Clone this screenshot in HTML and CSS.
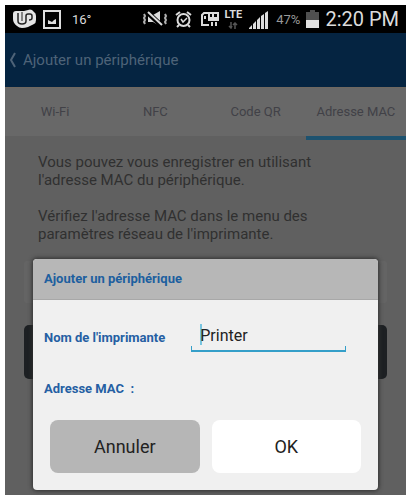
FILE: index.html
```html
<!DOCTYPE html>
<html lang="fr">
<head>
<meta charset="utf-8">
<meta name="viewport" content="width=device-width, initial-scale=1">
<title>Ajouter un périphérique</title>
<link rel="stylesheet" href="styles.css">
</head>
<body>
<div class="screen">
  <div class="status">
    <div class="status-group">
      <svg width="23" height="20" viewBox="0 0 23 20" aria-hidden="true">
        <path d="M0 5Q0 2 3 2h8l4-1q2-1 4 0l2 2q2 1 2 4v4q0 3-2 4l-6 3q-3 1-6 1-3 0-5-2-4-3-4-7z" fill="#e4e4e4"/>
        <path d="M5 4v8q0 3 4 3t4-3V7q0-2 2-2h2q2 0 2 2v2q0 2-3 2" fill="none" stroke="#222" stroke-width="1.500"/>
        <path d="M9 3v9" stroke="#222" stroke-width="1"/>
      </svg>
      <svg width="18" height="19" viewBox="0 0 18 19" aria-hidden="true">
        <rect x="1" y="1" width="16" height="17" fill="none" stroke="#dedede" stroke-width="2"/>
        <path d="M5 14v-4l2 1 2 1 2-2 2-1v5z" fill="#dedede"/>
      </svg>
      <span class="temp">16°</span>
    </div>
    <div class="status-group status-right">
      <svg width="27" height="16" viewBox="0 0 27 16" aria-hidden="true">
        <path d="M6 4h5l7-4v15l-7-4H6z" fill="#dcdcdc"/>
        <path d="M5 1l15 14" stroke="#000" stroke-width="5"/>
        <path d="M6 1l14 13" stroke="#dcdcdc" stroke-width="2"/>
        <path d="M2 3l1 2-1 2 1 2-1 2 1 2M23 3l1 2-1 2 1 2-1 2 1 2" fill="none" stroke="#b0b0b0" stroke-width="2"/>
      </svg>
      <svg width="17" height="17" viewBox="0 0 17 17" fill="none" stroke="#dcdcdc" stroke-width="2" aria-hidden="true">
        <circle cx="8.500" cy="9" r="6"/>
        <path d="M1 4l4-3M16 4l-4-3M4 14l-2 2M13 14l2 2"/>
        <path d="M6 8l2 3 4-4" stroke-width="1.500"/>
      </svg>
      <svg class="card" width="18" height="16" viewBox="0 0 18 16" fill="none" stroke="#dcdcdc" stroke-width="2" aria-hidden="true">
        <path d="M8 14H1V4l2-2h4M4 5v3"/>
        <path d="M8 2h4v5H8zM13 2h4v5h-4M7 9h11M11 11v4M15 11v4"/>
      </svg>
      <div class="lte"><span>LTE</span>
        <svg width="10" height="7" viewBox="0 0 10 7" fill="none" stroke="#555" stroke-width="1.500" aria-hidden="true"><path d="M3 0v6M1 4l2 2 1-2M7 7V1M5 3l2-2 2 2"/></svg>
      </div>
      <svg class="signal" width="19" height="18" viewBox="0 0 19 18" fill="#dcdcdc" aria-hidden="true">
        <path d="M0 18v-1l3-3v4zM4 18v-5l3-3v8zM8 18V9l3-3v12zM12 18V5l3-2v15zM16 18V2l3-2v18z"/>
      </svg>
      <span class="percent">47%</span>
      <svg width="13" height="18" viewBox="0 0 13 18" aria-hidden="true">
        <path d="M4 0h5v2h4v8H0V2h4z" fill="#505050"/><path d="M0 10h13v8H0z" fill="#e0e0e0"/>
      </svg>
      <time class="clock">2:20 PM</time>
    </div>
  </div>

  <header class="appbar">
    <a class="back" href="#">
      <svg width="8" height="16" viewBox="0 0 8 16" fill="none" stroke="#4e6378" stroke-width="2" aria-hidden="true"><path d="M6 1L2 8l4 7"/></svg>
      <span>Ajouter un périphérique</span>
    </a>
  </header>

  <nav class="tabs">
    <a class="tab" href="#">Wi-Fi</a>
    <a class="tab" href="#">NFC</a>
    <a class="tab" href="#">Code QR</a>
    <a class="tab active" href="#" aria-current="page">Adresse MAC</a>
  </nav>

  <main class="content">
    <p>Vous pouvez vous enregistrer en utilisant<br>l'adresse MAC du périphérique.</p>
    <p>Vérifiez l'adresse MAC dans le menu des<br>paramètres réseau de l'imprimante.</p>
    <input class="mac" type="text" aria-label="Adresse MAC" disabled>
    <button class="submit" type="button" aria-label="Ajouter" disabled></button>
  </main>

  <form class="dialog" role="dialog" aria-labelledby="dialog-title">
    <h2 class="dialog-title" id="dialog-title">Ajouter un périphérique</h2>
    <div class="dialog-body">
      <div class="field">
        <label class="label" for="printer-name">Nom de l'imprimante</label>
        <div class="entry"><input id="printer-name" type="text" value="Printer"></div>
      </div>
      <div class="label mac-line">Adresse MAC&nbsp; :</div>
      <div class="actions">
        <button class="button cancel" type="button">Annuler</button>
        <button class="button" type="submit">OK</button>
      </div>
    </div>
  </form>
</div>
</body>
</html>
```
FILE: styles.css
```css
* { box-sizing: border-box; }

body {
  margin: 0;
  padding: 5px 2px 0 5px;
  background: #fff;
  font-family: Roboto, "Liberation Sans", sans-serif;
}

a { color: inherit; text-decoration: none; }
svg { display: block; flex: none; }

.screen {
  position: relative;
  display: flex;
  flex-direction: column;
  min-height: calc(100vh - 5px);
  background: #606060;
  overflow: hidden;
}

.status {
  display: flex;
  justify-content: space-between;
  height: 28px;
  padding: 0 7px 0 8px;
  background: #000;
  color: #dcdcdc;
}

.status-group { display: flex; align-items: center; gap: 7px; }
.status-right { gap: 6px; }
.temp { margin-left: 4px; font-family: "Liberation Sans Narrow", Roboto, sans-serif; font-size: 13px; }
.card { margin-left: 3px; }
.lte { display: flex; flex-direction: column; align-items: center; gap: 2px; font-size: 11px; font-weight: 700; line-height: 10px; }
.signal { align-self: flex-end; margin: 0 2px 4px 1px; }
.percent { color: #999; font-size: 13px; }
.clock { font-size: 20px; }

.appbar {
  display: flex;
  align-items: center;
  height: 54px;
  padding: 0 4px;
  background: #052441;
  color: #4e6378;
  font-size: 15px;
}

.back { display: flex; align-items: center; gap: 6px; }

.tabs {
  display: grid;
  grid-template-columns: repeat(4, 1fr);
  background: #686868;
  border-top: 1px solid #706860;
  color: #414147;
  font-size: 13px;
}

.tab {
  height: 52px;
  line-height: 48px;
  border-bottom: 4px solid #606060;
  text-align: center;
  white-space: nowrap;
}

.active { border-color: #1d526f; }

.content {
  display: flex;
  flex-direction: column;
  padding: 13px 19px 0;
  color: #303030;
  font-size: 15px;
  line-height: 18px;
}

.content p { margin: 0 14px 18px; }

.mac { height: 42px; border: 0; border-radius: 3px; background: #646464; }

.submit { height: 54px; margin-top: 22px; border: 0; border-radius: 5px; background: #1d2023; }

.dialog {
  position: absolute;
  left: 28px;
  right: 28px;
  bottom: 5px;
  border-radius: 4px;
  background: #f0f0f0;
  box-shadow: 0 0 4px 1px #303030;
  overflow: hidden;
}

.dialog-title {
  margin: 0;
  padding: 0 11px;
  border-bottom: 1px solid #a8a8a8;
  background: #b7b7b7;
  color: #1d5f9f;
  font-size: 13px;
  line-height: 40px;
}

.dialog-body { padding: 23px 17px 17px 11px; }
.field { display: flex; align-items: center; gap: 26px; }
.label { flex: none; color: #255fa3; font-size: 13px; font-weight: 700; line-height: 26px; }

.entry {
  flex: 1;
  display: flex;
  margin-right: 15px;
  padding: 0 9px 3px;
  border-bottom: 2px solid #359fc9;
  background:
    linear-gradient(#359fc9, #359fc9) 0 100% / 1px 4px no-repeat,
    linear-gradient(#359fc9, #359fc9) 100% 100% / 1px 4px no-repeat,
    linear-gradient(#78c4e0, #78c4e0) 9px 1px / 2px 21px no-repeat;
}

.entry input {
  width: 100%;
  height: 24px;
  padding: 0;
  border: 0;
  outline: 0;
  background: transparent;
  color: #222;
  font: 16px Roboto, "Liberation Sans", sans-serif;
}

.mac-line { margin-top: 24px; }

.actions { display: grid; grid-template-columns: 1fr 1fr; gap: 12px; margin: 18px 0 0 6px; }

.button {
  height: 53px;
  border: 0;
  border-radius: 8px;
  background: #fff;
  color: #222;
  font: 18px Roboto, "Liberation Sans", sans-serif;
}

.cancel { background: #b6b6b6; }
```
